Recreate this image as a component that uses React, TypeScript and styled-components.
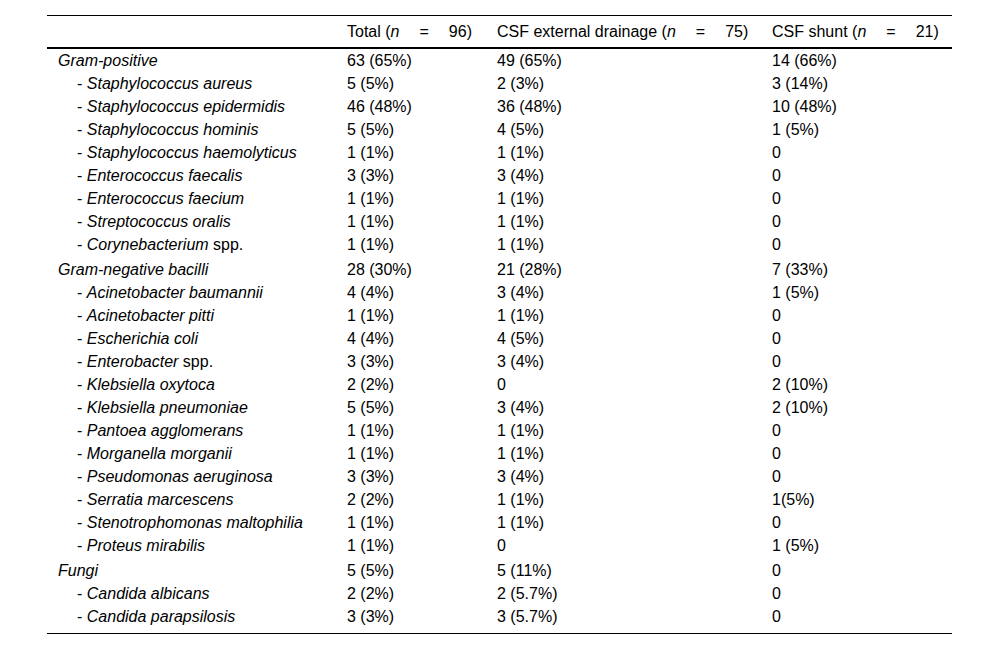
import React from "react";
import styled, { createGlobalStyle } from "styled-components";

const GlobalStyle = createGlobalStyle`
  html, body {
    margin: 0;
    padding: 0;
    background: #fff;
  }
  body {
    font-family: "Liberation Sans", Arial, sans-serif;
    color: #000;
  }
`;

const Page = styled.div`
  padding: 15px 48px 0 47px;
`;

const Table = styled.table`
  width: 905px;
  border-collapse: collapse;
  border-top: 1px solid #000;
  border-bottom: 1px solid #000;
  font-size: 16px;
  table-layout: fixed;
`;

const HeadCell = styled.th`
  height: 31px;
  padding: 0 0 0 11px;
  font-weight: normal;
  text-align: left;
  white-space: nowrap;
  border-bottom: 2px solid #000;
`;

const Cell = styled.td<{ $group?: boolean; $last?: boolean }>`
  height: 23px;
  padding: ${(p) => (p.$group ? "2px" : "0")} 0 ${(p) => (p.$last ? "5px" : "0")} 11px;
  line-height: 18px;
  white-space: nowrap;
  vertical-align: middle;
`;

const LabelCell = styled(Cell)<{ $indent?: boolean }>`
  padding-left: ${(p) => (p.$indent ? "30px" : "11px")};
`;

const Name = styled.i`
  font-style: italic;
`;

const Eq = styled.span`
  padding: 0 20px;
`;

interface Col {
  name: string;
  n: number;
  width: number;
}

const cols: Col[] = [
  { name: "Total", n: 96, width: 150 },
  { name: "CSF external drainage", n: 75, width: 275 },
  { name: "CSF shunt", n: 21, width: 191 },
];

type Row = {
  label: string;
  suffix?: string;
  group?: boolean;
  values: [string, string, string];
};

const rows: Row[] = [
  { label: "Gram-positive", group: true, values: ["63 (65%)", "49 (65%)", "14 (66%)"] },
  { label: "Staphylococcus aureus", values: ["5 (5%)", "2 (3%)", "3 (14%)"] },
  { label: "Staphylococcus epidermidis", values: ["46 (48%)", "36 (48%)", "10 (48%)"] },
  { label: "Staphylococcus hominis", values: ["5 (5%)", "4 (5%)", "1 (5%)"] },
  { label: "Staphylococcus haemolyticus", values: ["1 (1%)", "1 (1%)", "0"] },
  { label: "Enterococcus faecalis", values: ["3 (3%)", "3 (4%)", "0"] },
  { label: "Enterococcus faecium", values: ["1 (1%)", "1 (1%)", "0"] },
  { label: "Streptococcus oralis", values: ["1 (1%)", "1 (1%)", "0"] },
  { label: "Corynebacterium", suffix: "spp.", values: ["1 (1%)", "1 (1%)", "0"] },
  { label: "Gram-negative bacilli", group: true, values: ["28 (30%)", "21 (28%)", "7 (33%)"] },
  { label: "Acinetobacter baumannii", values: ["4 (4%)", "3 (4%)", "1 (5%)"] },
  { label: "Acinetobacter pitti", values: ["1 (1%)", "1 (1%)", "0"] },
  { label: "Escherichia coli", values: ["4 (4%)", "4 (5%)", "0"] },
  { label: "Enterobacter", suffix: "spp.", values: ["3 (3%)", "3 (4%)", "0"] },
  { label: "Klebsiella oxytoca", values: ["2 (2%)", "0", "2 (10%)"] },
  { label: "Klebsiella pneumoniae", values: ["5 (5%)", "3 (4%)", "2 (10%)"] },
  { label: "Pantoea agglomerans", values: ["1 (1%)", "1 (1%)", "0"] },
  { label: "Morganella morganii", values: ["1 (1%)", "1 (1%)", "0"] },
  { label: "Pseudomonas aeruginosa", values: ["3 (3%)", "3 (4%)", "0"] },
  { label: "Serratia marcescens", values: ["2 (2%)", "1 (1%)", "1(5%)"] },
  { label: "Stenotrophomonas maltophilia", values: ["1 (1%)", "1 (1%)", "0"] },
  { label: "Proteus mirabilis", values: ["1 (1%)", "0", "1 (5%)"] },
  { label: "Fungi", group: true, values: ["5 (5%)", "5 (11%)", "0"] },
  { label: "Candida albicans", values: ["2 (2%)", "2 (5.7%)", "0"] },
  { label: "Candida parapsilosis", values: ["3 (3%)", "3 (5.7%)", "0"] },
];

const App = () => {
  return (
    <Page>
      <GlobalStyle />
      <Table>
        <colgroup>
          <col style={{ width: 289 }} />
          {cols.map((c) => (
            <col key={c.name} style={{ width: c.width }} />
          ))}
        </colgroup>
        <thead>
          <tr>
            <HeadCell />
            {cols.map((c) => (
              <HeadCell key={c.name}>
                {c.name} (<Name>n</Name>
                <Eq>=</Eq>
                {c.n})
              </HeadCell>
            ))}
          </tr>
        </thead>
        <tbody>
          {rows.map((r, i) => {
            // group rows after the first get a little more air above them
            const extra = !!r.group && i > 0;
            const last = i === rows.length - 1;
            return (
              <tr key={r.label}>
                <LabelCell $indent={!r.group} $group={extra} $last={last}>
                  {!r.group && "- "}
                  <Name>{r.label}</Name>
                  {r.suffix && " " + r.suffix}
                </LabelCell>
                {r.values.map((v, j) => (
                  <Cell key={j} $group={extra} $last={last}>
                    {v}
                  </Cell>
                ))}
              </tr>
            );
          })}
        </tbody>
      </Table>
    </Page>
  );
};

export default App;
